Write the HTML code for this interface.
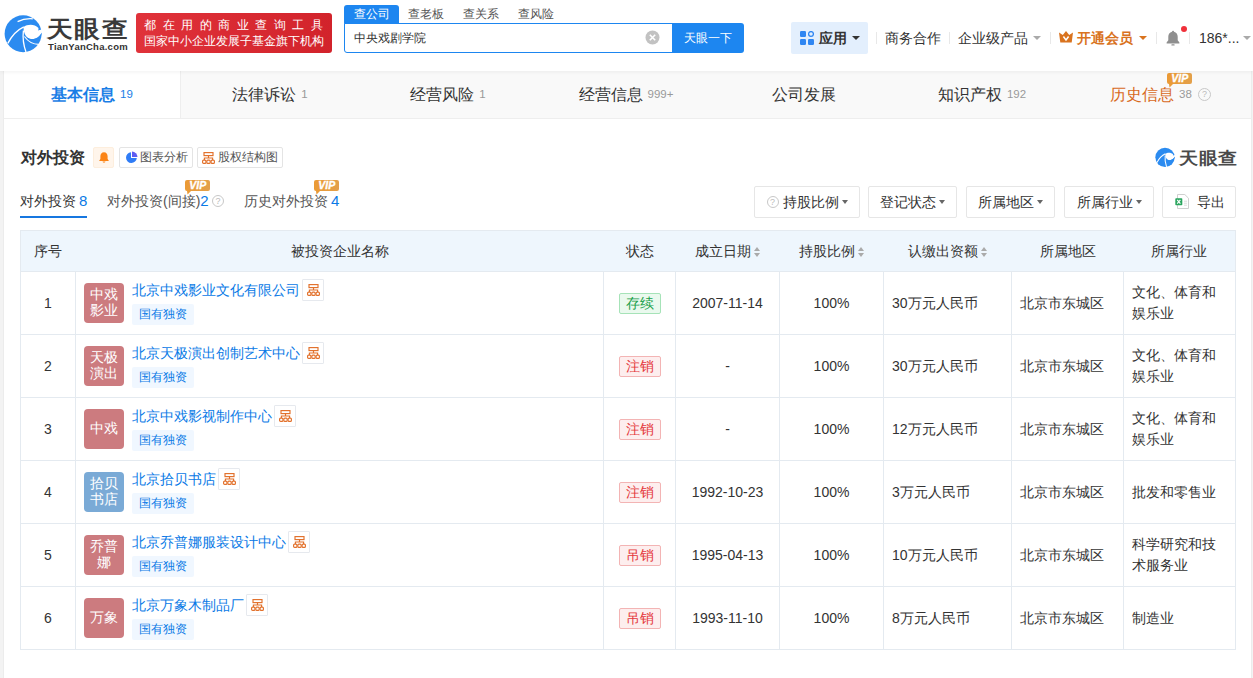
<!DOCTYPE html>
<html><head><meta charset="utf-8">
<style>
*{margin:0;padding:0;box-sizing:border-box}
html,body{width:1253px;height:678px;overflow:hidden}
body{background:#f3f3f3;font-family:"Liberation Sans",sans-serif;color:#333;position:relative}
.abs{position:absolute}
#hdr{position:absolute;left:0;top:0;width:1253px;height:71px;background:#fff;box-shadow:0 1px 4px rgba(0,0,0,.06);z-index:2}
.nw{white-space:nowrap}
#tabs{position:absolute;left:3px;top:71px;width:1249px;height:48px;background:#f9f9f9;border-bottom:1px solid #eeeeee;border-left:1px solid #ececec;border-right:1px solid #ececec}
.tab{position:absolute;top:0;height:47px;width:178px;text-align:center;line-height:47px;font-size:16px;color:#333;white-space:nowrap}
.tab .c{font-size:11.5px;color:#999;margin-left:5px;vertical-align:2px}
#card{position:absolute;left:3px;top:119px;width:1249px;height:559px;background:#fff;border-left:1px solid #ececec;border-right:1px solid #ececec}
table{border-collapse:collapse;position:absolute;left:20px;top:230px;table-layout:fixed}
td,th{border:1px solid #e4eaf0;font-size:14px;font-weight:normal;color:#333}
th{height:41px;background:#eef6fd;text-align:center;padding-top:2px;border-left:none;border-right:none}
th:first-child{border-left:1px solid #e4eaf0}th:last-child{border-right:1px solid #e4eaf0}
td{height:63px;padding:0 8px;line-height:21px}
td.c{text-align:center;padding:0}
td.nm{position:relative;padding:0}
.lg{position:absolute;left:8px;top:11px;width:40px;height:40px;border-radius:4px;color:#fff;font-size:13.5px;line-height:16.5px;display:flex;align-items:center;justify-content:center;text-align:center;padding:0 5px}
.cn{position:absolute;left:56px;top:8px;white-space:nowrap;font-size:14px;line-height:21px}
.cn a{color:#0a7ae6}
.si{display:inline-block;vertical-align:top;width:22px;height:22px;border:1px solid #e6e9ee;border-radius:1px;margin-left:2px;text-align:center;line-height:19px;position:relative;top:-1px}
.si svg{vertical-align:middle}
.tg{position:absolute;left:56px;top:32px;width:62px;height:21px;background:#f0f7ff;color:#0a7ae6;font-size:12px;line-height:21px;text-align:center;border-radius:2px}
.st{display:inline-block;width:42px;height:21px;line-height:19px;font-size:14px;border:1px solid;border-radius:2px}
.st.ok{color:#20a04a;background:#eaf9ee;border-color:#a6e3b8}
.st.bad{color:#e4393c;background:#fdeeee;border-color:#f3b4b4}
.fb{position:absolute;top:186px;height:32px;border:1px solid #e6e6e6;border-radius:2px;font-size:14px;line-height:30px;color:#333;text-align:center;white-space:nowrap;background:#fff}
.cr{display:inline-block;width:0;height:0;border-left:3px solid transparent;border-right:3px solid transparent;border-top:4px solid #666;vertical-align:middle;margin-left:3px;position:relative;top:-1px}
.q{display:inline-block;width:12px;height:12px;border:1px solid #c8c8c8;border-radius:50%;font-size:9px;line-height:10px;text-align:center;color:#bbb;vertical-align:middle;margin-right:4px;position:relative;top:-1px}
.fl{display:flex;justify-content:space-between}
.tri{width:0;height:0;border-left:4px solid transparent;border-right:4px solid transparent;border-top:4px solid #333}
.sep{top:32px;width:1px;height:12px;background:#e8e8e8}
.so{display:inline-block;width:7px;height:10px;margin-left:3px;vertical-align:-1px;position:relative}
.so:before{content:"";position:absolute;left:0;top:0;border-left:3px solid transparent;border-right:3px solid transparent;border-bottom:4px solid #aaa}
.so:after{content:"";position:absolute;left:0;top:6px;border-left:3px solid transparent;border-right:3px solid transparent;border-top:4px solid #aaa}
</style></head><body>
<div id="hdr">
  <svg class="abs" style="left:2px;top:12px" width="44" height="44" viewBox="0 0 44 44">
    <circle cx="21.1" cy="21.75" r="18.5" fill="#2b8bf0"/>
    <path d="M21.4 15.2C25.5 12 32.5 11.8 36.2 15.8 36.8 16.6 36.5 17.8 36 18.4L41 17V21.6L39.6 20.8C37.8 25.2 32.5 28 28 26.8 24.2 25.8 22 22.5 21.4 15.2Z" fill="#fff"/>
    <path d="M22.6 21.8C24 25.5 27 27.4 30.5 27.3 34.5 27.2 38 24.6 39.6 20.8 39.3 25.6 36.5 30 32.6 31.6 28 30.6 24 26.5 22.6 21.8Z" fill="#2b8bf0"/>
    <path d="M5.8 31.4C9.5 24 15 18 21.8 14.8" fill="none" stroke="#fff" stroke-width="1.3"/>
    <path d="M21.4 18.5C20.6 25.5 21.6 33.5 24 40" fill="none" stroke="#fff" stroke-width="1.3"/>
    <path d="M22.4 24.5C26 29.5 31.5 32.5 37.2 32.4" fill="none" stroke="#fff" stroke-width="1.1"/>
    <path d="M15.6 9.6C20 7.4 25.8 6.4 30.8 6.8" fill="none" stroke="#fff" stroke-width="1.3"/>
  </svg>
  <div class="abs nw" style="left:47px;top:15px;font-size:23px;line-height:28px;font-weight:bold;color:#3a3a3a;letter-spacing:1.5px;transform:scaleX(1.12);transform-origin:0 0">天眼查</div>
  <div class="abs nw" style="left:48px;top:42px;font-size:9.5px;line-height:10px;font-weight:bold;color:#333;letter-spacing:0.25px">TianYanCha.com</div>
  <div class="abs" style="left:136px;top:13px;width:196px;height:40px;background:linear-gradient(90deg,#e0323a,#d2232b);border-radius:3px"></div>
  <div class="abs nw fl" style="left:144px;top:17px;width:179px;font-size:12px;color:#fff;line-height:17px"><span>都</span><span>在</span><span>用</span><span>的</span><span>商</span><span>业</span><span>查</span><span>询</span><span>工</span><span>具</span></div>
  <div class="abs nw fl" style="left:144px;top:33px;width:179px;font-size:12px;color:#fff;line-height:17px"><span>国</span><span>家</span><span>中</span><span>小</span><span>企</span><span>业</span><span>发</span><span>展</span><span>子</span><span>基</span><span>金</span><span>旗</span><span>下</span><span>机</span><span>构</span></div>
  <!-- search -->
  <div class="abs" style="left:344px;top:5px;width:55px;height:19px;background:#1d86f0;border-radius:3px 3px 0 0"></div>
  <div class="abs nw" style="left:354px;top:5px;font-size:12px;line-height:18px;color:#fff">查公司</div>
  <div class="abs nw" style="left:408px;top:5px;font-size:12px;line-height:18px;color:#555">查老板</div>
  <div class="abs nw" style="left:463px;top:5px;font-size:12px;line-height:18px;color:#555">查关系</div>
  <div class="abs nw" style="left:518px;top:5px;font-size:12px;line-height:18px;color:#555">查风险</div>
  <div class="abs" style="left:344px;top:23px;width:330px;height:30px;border:1px solid #1d86f0;border-radius:0 0 0 3px;background:#fff"></div>
  <div class="abs nw" style="left:354px;top:23px;font-size:12px;line-height:30px;color:#333">中央戏剧学院</div>
  <svg class="abs" style="left:645px;top:30px" width="15" height="15" viewBox="0 0 15 15"><circle cx="7.5" cy="7.5" r="7" fill="#c2c2c2"/><path d="M4.8 4.8l5.4 5.4M10.2 4.8l-5.4 5.4" stroke="#fff" stroke-width="1.6"/></svg>
  <div class="abs" style="left:672px;top:23px;width:72px;height:30px;background:#1d86f0;border-radius:0 3px 3px 0;color:#fff;font-size:12px;line-height:30px;text-align:center">天眼一下</div>
  <!-- right nav -->
  <div class="abs" style="left:791px;top:22px;width:77px;height:32px;background:#e3effd;border-radius:2px"></div>
  <svg class="abs" style="left:800px;top:31px" width="14" height="14" viewBox="0 0 14 14"><rect x="0" y="0" width="6" height="6" rx="1.2" fill="#2f86f2"/><circle cx="11" cy="3" r="2.4" fill="none" stroke="#2f86f2" stroke-width="1.3"/><rect x="0" y="8" width="6" height="6" rx="1.2" fill="#2f86f2"/><rect x="8" y="8" width="6" height="6" rx="1.2" fill="#2f86f2"/></svg>
  <div class="abs nw" style="left:819px;top:22px;font-size:14px;line-height:32px;color:#333;font-weight:bold">应用</div>
  <i class="abs tri" style="left:852px;top:36px;border-top-color:#333"></i>
  <div class="abs sep" style="left:876px"></div>
  <div class="abs nw" style="left:885px;top:22px;font-size:14px;line-height:32px;color:#333">商务合作</div>
  <div class="abs sep" style="left:949px"></div>
  <div class="abs nw" style="left:958px;top:22px;font-size:14px;line-height:32px;color:#333">企业级产品</div>
  <i class="abs tri" style="left:1033px;top:36px;border-top-color:#aaa"></i>
  <div class="abs sep" style="left:1050px"></div>
  <svg class="abs" style="left:1059px;top:31px" width="14" height="12" viewBox="0 0 14 12"><path d="M0 1.5l3.8 2.5L7 0l3.2 4L14 1.5 12.7 11.5H1.3z" fill="#d9731e"/><path d="M4.4 5.5L7 9l2.6-3.5" fill="none" stroke="#fff" stroke-width="1.5"/></svg>
  <div class="abs nw" style="left:1077px;top:22px;font-size:14px;line-height:32px;color:#d9731e;font-weight:bold">开通会员</div>
  <i class="abs tri" style="left:1139px;top:36px;border-top-color:#d9731e"></i>
  <div class="abs sep" style="left:1156px"></div>
  <svg class="abs" style="left:1166px;top:30px" width="14" height="16" viewBox="0 0 14 16"><path d="M7 0.8c.6 0 1 .4 1 .9 2.4.5 3.7 2.5 3.7 5v3.6L13.4 12.6v.8H.6v-.8L2.3 10.3V6.7c0-2.5 1.3-4.5 3.7-5 0-.5.4-.9 1-.9z" fill="#8f8f8f"/><rect x="5.3" y="14.2" width="3.4" height="1.4" rx=".7" fill="#8f8f8f"/></svg>
  <div class="abs" style="left:1181px;top:26px;width:6px;height:6px;border-radius:50%;background:#f0303a"></div>
  <div class="abs sep" style="left:1189px"></div>
  <div class="abs nw" style="left:1199px;top:22px;font-size:14px;line-height:32px;color:#333">186*...</div>
  <i class="abs tri" style="left:1243px;top:36px;border-top-color:#aaa"></i>
</div>
<div id="tabs">
  <div class="tab" style="left:0;width:177px;border-right:1px solid #eee;background:#fff;color:#1a7ee6;font-weight:bold">基本信息<span class="c" style="color:#1a7ee6;font-weight:normal">19</span></div>
  <div class="tab" style="left:177px">法律诉讼<span class="c">1</span></div>
  <div class="tab" style="left:355px">经营风险<span class="c">1</span></div>
  <div class="tab" style="left:533px">经营信息<span class="c">999+</span></div>
  <div class="tab" style="left:711px">公司发展</div>
  <div class="tab" style="left:889px">知识产权<span class="c">192</span></div>
  <div class="tab" style="left:1067px;color:#d8691c;padding-left:5px">历史信息<span class="c">38</span><span class="q" style="margin-left:6px;vertical-align:middle;top:-1px;width:13px;height:13px;line-height:11px">?</span></div>
  <svg style="position:absolute;left:1163px;top:2px" width="25" height="15" viewBox="0 0 25 15"><defs><linearGradient id="vg3" x1="0" x2="1"><stop offset="0" stop-color="#eb9a35"/><stop offset="1" stop-color="#e3a04a"/></linearGradient></defs><path d="M2 0H23a2 2 0 0 1 2 2V9a2 2 0 0 1-2 2H6L2.5 14.5 2 11A2 2 0 0 1 0 9V2A2 2 0 0 1 2 0z" fill="url(#vg3)"/><text x="12.8" y="9.3" text-anchor="middle" font-family="Liberation Sans" font-weight="bold" font-style="italic" font-size="10.5" fill="#fff" stroke="#fff" stroke-width="0.35">VIP</text></svg>
</div>
<div id="card"></div>
<div class="abs nw" style="left:21px;top:147px;font-size:16px;font-weight:bold;line-height:22px;color:#333">对外投资</div>
<div class="abs" style="left:93px;top:147px;width:21px;height:21px;background:#fff5eb;border:1px solid #fdeedd;border-radius:2px"></div>
<svg class="abs" style="left:99px;top:152px" width="10" height="11" viewBox="0 0 10 11"><path d="M5 0.3c2.3 0 3.6 1.8 3.6 4v2.6L9.7 8.6v.5H.3v-.5L1.4 6.9V4.3C1.4 2.1 2.7.3 5 .3zM3.6 9.6h2.8C6.4 10.3 5.8 10.8 5 10.8S3.6 10.3 3.6 9.6z" fill="#fb8416"/></svg>
<div class="abs" style="left:119px;top:147px;width:74px;height:21px;border:1px solid #e4e4e4;border-radius:2px"></div>
<svg class="abs" style="left:125px;top:151px" width="13" height="13" viewBox="0 0 13 13"><path d="M6 1.2A5.4 5.4 0 1 0 11.8 7H6z" fill="#2f7cf6"/><path d="M7 0.5V6h5.5A5.6 5.6 0 0 0 7 0.5z" fill="#5e5cf2"/></svg>
<div class="abs nw" style="left:140px;top:147px;font-size:12px;line-height:21px;color:#555">图表分析</div>
<div class="abs" style="left:197px;top:147px;width:86px;height:21px;border:1px solid #e4e4e4;border-radius:2px"></div>
<svg class="abs" style="left:202px;top:152px" width="13" height="12" viewBox="0 0 13 12"><g fill="none" stroke="#e2702a" stroke-width="1.15"><rect x="2" y="0.6" width="9" height="3"/><path d="M6.5 3.6V6M2.4 8.1V6H10.6V8.1"/><rect x="0.6" y="8.1" width="3.3" height="3.3" rx="1"/><rect x="4.85" y="8.1" width="3.3" height="3.3" rx="1"/><rect x="9.1" y="8.1" width="3.3" height="3.3" rx="1"/></g></svg>
<div class="abs nw" style="left:218px;top:147px;font-size:12px;line-height:21px;color:#555">股权结构图</div>
<!-- sub tabs -->
<div class="abs nw" style="left:20px;top:190px;font-size:14px;line-height:21px;color:#333">对外投资<span style="color:#0a7ae6;font-size:15px;margin-left:3px">8</span></div>
<div class="abs" style="left:20px;top:216px;width:67px;height:2px;background:#1677e0"></div>
<div class="abs nw" style="left:107px;top:190px;font-size:14px;line-height:21px;color:#555">对外投资(间接)<span style="color:#0a7ae6;font-size:15px;margin-left:0px">2</span></div>
<div class="abs" style="left:212px;top:195px;width:12px;height:12px;border:1px solid #c8c8c8;border-radius:50%;font-size:9px;line-height:10px;text-align:center;color:#bbb">?</div>
<div class="abs nw" style="left:244px;top:190px;font-size:14px;line-height:21px;color:#555">历史对外投资<span style="color:#0a7ae6;font-size:15px;margin-left:3px">4</span></div>
<svg class="abs" style="left:185px;top:180px" width="25" height="15" viewBox="0 0 25 15"><defs><linearGradient id="vg1" x1="0" x2="1"><stop offset="0" stop-color="#eb9a35"/><stop offset="1" stop-color="#e3a04a"/></linearGradient></defs><path d="M2 0H23a2 2 0 0 1 2 2V9a2 2 0 0 1-2 2H6L2.5 14.5 2 11A2 2 0 0 1 0 9V2A2 2 0 0 1 2 0z" fill="url(#vg1)"/><text x="12.8" y="9.3" text-anchor="middle" font-family="Liberation Sans" font-weight="bold" font-style="italic" font-size="10.5" fill="#fff" stroke="#fff" stroke-width="0.35">VIP</text></svg>
<svg class="abs" style="left:314px;top:180px" width="25" height="15" viewBox="0 0 25 15"><defs><linearGradient id="vg2" x1="0" x2="1"><stop offset="0" stop-color="#eb9a35"/><stop offset="1" stop-color="#e3a04a"/></linearGradient></defs><path d="M2 0H23a2 2 0 0 1 2 2V9a2 2 0 0 1-2 2H6L2.5 14.5 2 11A2 2 0 0 1 0 9V2A2 2 0 0 1 2 0z" fill="url(#vg2)"/><text x="12.8" y="9.3" text-anchor="middle" font-family="Liberation Sans" font-weight="bold" font-style="italic" font-size="10.5" fill="#fff" stroke="#fff" stroke-width="0.35">VIP</text></svg>
<svg class="abs" style="left:1154px;top:146px" width="23" height="23" viewBox="0 0 44 44">
    <circle cx="21.1" cy="21.75" r="18.5" fill="#2b8bf0"/>
    <path d="M21.4 15.2C25.5 12 32.5 11.8 36.2 15.8 36.8 16.6 36.5 17.8 36 18.4L41 17V21.6L39.6 20.8C37.8 25.2 32.5 28 28 26.8 24.2 25.8 22 22.5 21.4 15.2Z" fill="#fff"/>
    <path d="M22.6 21.8C24 25.5 27 27.4 30.5 27.3 34.5 27.2 38 24.6 39.6 20.8 39.3 25.6 36.5 30 32.6 31.6 28 30.6 24 26.5 22.6 21.8Z" fill="#2b8bf0"/>
    <path d="M5.8 31.4C9.5 24 15 18 21.8 14.8" fill="none" stroke="#fff" stroke-width="2"/>
    <path d="M21.4 18.5C20.6 25.5 21.6 33.5 24 40" fill="none" stroke="#fff" stroke-width="2"/>
  </svg>
<div class="abs nw" style="left:1179px;top:146px;font-size:17px;line-height:25px;font-weight:bold;color:#4a4a4a;letter-spacing:0.5px;transform:scaleX(1.12);transform-origin:0 0">天眼查</div>
<!-- filters -->
<div class="fb" style="left:754px;width:106px"><span class="q">?</span>持股比例<i class="cr"></i></div>
<div class="fb" style="left:868px;width:89px">登记状态<i class="cr"></i></div>
<div class="fb" style="left:966px;width:89px">所属地区<i class="cr"></i></div>
<div class="fb" style="left:1064px;width:90px">所属行业<i class="cr"></i></div>
<div class="fb" style="left:1162px;width:74px"><svg width="14" height="15" viewBox="0 0 14 15" style="vertical-align:-2px;margin-right:8px;margin-left:1px"><path d="M2.5 .5H9.8L13.5 4.2V14.5H2.5z" fill="#fff" stroke="#cfcfcf"/><path d="M9 7.2h3M9 9.2h3M9 11.2h3" stroke="#ddd"/><rect x="0.3" y="4.3" width="7" height="7" rx="0.8" fill="#2aa55e"/><path d="M2.2 5.9l3.2 3.8M5.4 5.9L2.2 9.7" stroke="#fff" stroke-width="1.2"/></svg>导出</div>

<table>
<colgroup><col style="width:55px"><col style="width:528px"><col style="width:72px"><col style="width:104px"><col style="width:104px"><col style="width:128px"><col style="width:112px"><col style="width:112px"></colgroup>
<tr><th>序号</th><th>被投资企业名称</th><th>状态</th><th>成立日期<i class="so"></i></th><th>持股比例<i class="so"></i></th><th>认缴出资额<i class="so"></i></th><th>所属地区</th><th>所属行业</th></tr>
<tr><td class="c">1</td><td class="nm"><div class="lg" style="background:#cc7b7f">中戏<br>影业</div><div class="cn"><a>北京中戏影业文化有限公司</a><span class="si"><svg width="13" height="12" viewBox="0 0 13 12"><g fill="none" stroke="#e2702a" stroke-width="1.15"><rect x="2" y="0.6" width="9" height="3"/><path d="M6.5 3.6V6M2.4 8.1V6H10.6V8.1"/><rect x="0.6" y="8.1" width="3.3" height="3.3" rx="1"/><rect x="4.85" y="8.1" width="3.3" height="3.3" rx="1"/><rect x="9.1" y="8.1" width="3.3" height="3.3" rx="1"/></g></svg></span></div><div class="tg">国有独资</div></td><td class="c"><span class="st ok">存续</span></td><td class="c">2007-11-14</td><td class="c">100%</td><td>30万元人民币</td><td>北京市东城区</td><td class="ind">文化、体育和<br>娱乐业</td></tr>
<tr><td class="c">2</td><td class="nm"><div class="lg" style="background:#cc7b7f">天极<br>演出</div><div class="cn"><a>北京天极演出创制艺术中心</a><span class="si"><svg width="13" height="12" viewBox="0 0 13 12"><g fill="none" stroke="#e2702a" stroke-width="1.15"><rect x="2" y="0.6" width="9" height="3"/><path d="M6.5 3.6V6M2.4 8.1V6H10.6V8.1"/><rect x="0.6" y="8.1" width="3.3" height="3.3" rx="1"/><rect x="4.85" y="8.1" width="3.3" height="3.3" rx="1"/><rect x="9.1" y="8.1" width="3.3" height="3.3" rx="1"/></g></svg></span></div><div class="tg">国有独资</div></td><td class="c"><span class="st bad">注销</span></td><td class="c">-</td><td class="c">100%</td><td>30万元人民币</td><td>北京市东城区</td><td class="ind">文化、体育和<br>娱乐业</td></tr>
<tr><td class="c">3</td><td class="nm"><div class="lg" style="background:#cc7b7f">中戏</div><div class="cn"><a>北京中戏影视制作中心</a><span class="si"><svg width="13" height="12" viewBox="0 0 13 12"><g fill="none" stroke="#e2702a" stroke-width="1.15"><rect x="2" y="0.6" width="9" height="3"/><path d="M6.5 3.6V6M2.4 8.1V6H10.6V8.1"/><rect x="0.6" y="8.1" width="3.3" height="3.3" rx="1"/><rect x="4.85" y="8.1" width="3.3" height="3.3" rx="1"/><rect x="9.1" y="8.1" width="3.3" height="3.3" rx="1"/></g></svg></span></div><div class="tg">国有独资</div></td><td class="c"><span class="st bad">注销</span></td><td class="c">-</td><td class="c">100%</td><td>12万元人民币</td><td>北京市东城区</td><td class="ind">文化、体育和<br>娱乐业</td></tr>
<tr><td class="c">4</td><td class="nm"><div class="lg" style="background:#7aaad6">拾贝<br>书店</div><div class="cn"><a>北京拾贝书店</a><span class="si"><svg width="13" height="12" viewBox="0 0 13 12"><g fill="none" stroke="#e2702a" stroke-width="1.15"><rect x="2" y="0.6" width="9" height="3"/><path d="M6.5 3.6V6M2.4 8.1V6H10.6V8.1"/><rect x="0.6" y="8.1" width="3.3" height="3.3" rx="1"/><rect x="4.85" y="8.1" width="3.3" height="3.3" rx="1"/><rect x="9.1" y="8.1" width="3.3" height="3.3" rx="1"/></g></svg></span></div><div class="tg">国有独资</div></td><td class="c"><span class="st bad">注销</span></td><td class="c">1992-10-23</td><td class="c">100%</td><td>3万元人民币</td><td>北京市东城区</td><td class="ind">批发和零售业</td></tr>
<tr><td class="c">5</td><td class="nm"><div class="lg" style="background:#cc7b7f">乔普<br>娜</div><div class="cn"><a>北京乔普娜服装设计中心</a><span class="si"><svg width="13" height="12" viewBox="0 0 13 12"><g fill="none" stroke="#e2702a" stroke-width="1.15"><rect x="2" y="0.6" width="9" height="3"/><path d="M6.5 3.6V6M2.4 8.1V6H10.6V8.1"/><rect x="0.6" y="8.1" width="3.3" height="3.3" rx="1"/><rect x="4.85" y="8.1" width="3.3" height="3.3" rx="1"/><rect x="9.1" y="8.1" width="3.3" height="3.3" rx="1"/></g></svg></span></div><div class="tg">国有独资</div></td><td class="c"><span class="st bad">吊销</span></td><td class="c">1995-04-13</td><td class="c">100%</td><td>10万元人民币</td><td>北京市东城区</td><td class="ind">科学研究和技<br>术服务业</td></tr>
<tr><td class="c">6</td><td class="nm"><div class="lg" style="background:#cc7b7f">万象</div><div class="cn"><a>北京万象木制品厂</a><span class="si"><svg width="13" height="12" viewBox="0 0 13 12"><g fill="none" stroke="#e2702a" stroke-width="1.15"><rect x="2" y="0.6" width="9" height="3"/><path d="M6.5 3.6V6M2.4 8.1V6H10.6V8.1"/><rect x="0.6" y="8.1" width="3.3" height="3.3" rx="1"/><rect x="4.85" y="8.1" width="3.3" height="3.3" rx="1"/><rect x="9.1" y="8.1" width="3.3" height="3.3" rx="1"/></g></svg></span></div><div class="tg">国有独资</div></td><td class="c"><span class="st bad">吊销</span></td><td class="c">1993-11-10</td><td class="c">100%</td><td>8万元人民币</td><td>北京市东城区</td><td class="ind">制造业</td></tr>
</table>
</body></html>
